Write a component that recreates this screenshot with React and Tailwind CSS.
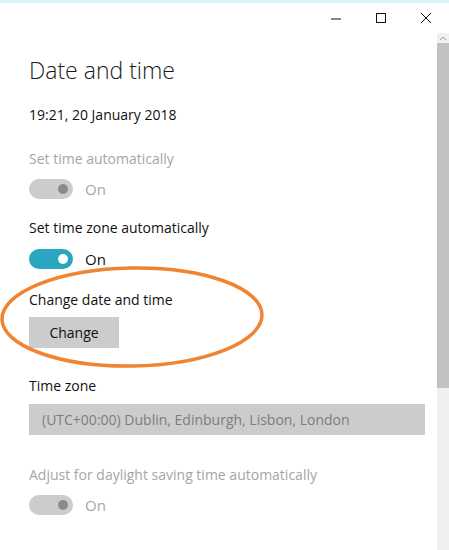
import React from "react";

const Toggle = ({ on, disabled }) => {
  const track = disabled ? "bg-[#cccccc]" : "bg-[#2aa6c1]";
  const knob = disabled ? "bg-[#8a8a8a]" : "bg-white";
  return (
    <div className="flex items-center gap-3">
      <div className={`w-[44px] h-[20px] rounded-full ${track} flex items-center justify-end pr-[5px]`}>
        <div className={`w-[10px] h-[10px] rounded-full ${knob}`} />
      </div>
      <span className={`text-[15px] ${disabled ? "text-[#a6a6a6]" : "text-[#111]"}`}>{on ? "On" : "Off"}</span>
    </div>
  );
};

const WindowControls = () => (
  <div className="flex justify-end items-center h-[30px] pr-[17px] gap-[33px]">
    <svg width="12" height="12" viewBox="0 0 12 12">
      <path d="M1 7h10" stroke="#111" strokeWidth="1" />
    </svg>
    <svg width="12" height="12" viewBox="0 0 12 12">
      <rect x="1.5" y="1.5" width="9" height="9" fill="none" stroke="#111" strokeWidth="1" />
    </svg>
    <svg width="12" height="12" viewBox="0 0 12 12">
      <path d="M1 1l10 10M11 1L1 11" stroke="#111" strokeWidth="1" />
    </svg>
  </div>
);

const Scrollbar = () => (
  <div className="w-[12px] flex flex-col bg-[#f0f0f0]">
    <div className="h-[10px] flex items-center justify-center bg-[#f0f0f0]">
      <svg width="8" height="5" viewBox="0 0 8 5">
        <path d="M1 4l3-3 3 3" fill="none" stroke="#9a9a9a" strokeWidth="1" />
      </svg>
    </div>
    <div className="h-[345px] bg-[#c2c2c2]" />
  </div>
);

export default function App() {
  return (
    <div
      className="w-[449px] h-[550px] bg-white overflow-hidden flex flex-col"
      style={{ fontFamily: '"Open Sans", "Noto Sans", Arial, sans-serif' }}
    >
      <div className="h-[3px] bg-[#d9f4f7]" />
      <WindowControls />
      <div className="flex flex-1">
        <div className="flex-1 pl-[29px] pr-[12px] relative">
          <h1 className="text-[23px] font-light text-[#1a1a1a] mt-[22px] leading-[30px]">Date and time</h1>
          <p className="text-[14px] text-[#111] mt-[20px] leading-[20px]">19:21, 20 January 2018</p>

          <p className="text-[14px] text-[#a6a6a6] mt-[24px] leading-[20px]">Set time automatically</p>
          <div className="mt-[9px]">
            <Toggle on disabled />
          </div>

          <p className="text-[14px] text-[#111] mt-[17px] leading-[20px]">Set time zone automatically</p>
          <div className="mt-[10px]">
            <Toggle on />
          </div>

          <p className="text-[14px] text-[#111] mt-[20px] leading-[20px]">Change date and time</p>
          <button className="mt-[7px] w-[90px] h-[31px] bg-[#cccccc] text-[14px] text-[#111]">Change</button>

          <p className="text-[14px] text-[#111] mt-[28px] leading-[20px]">Time zone</p>
          <div className="mt-[8px] h-[31px] bg-[#cccccc] flex items-center pl-[13px] text-[14px] text-[#7d7d7d]">
            (UTC+00:00) Dublin, Edinburgh, Lisbon, London
          </div>

          <p className="text-[14px] text-[#a6a6a6] mt-[30px] leading-[20px]">Adjust for daylight saving time automatically</p>
          <div className="mt-[9px]">
            <Toggle on disabled />
          </div>

          {/* hand-drawn highlight ring */}
          <svg
            className="absolute left-[-3px] top-[230px] max-w-none pointer-events-none"
            width="270"
            height="108"
            viewBox="0 0 270 108"
          >
            <ellipse
              cx="135"
              cy="54"
              rx="130"
              ry="49"
              fill="none"
              stroke="#f08430"
              strokeWidth="3.5"
              transform="rotate(-1 135 54)"
            />
          </svg>
        </div>
        <Scrollbar />
      </div>
    </div>
  );
}
